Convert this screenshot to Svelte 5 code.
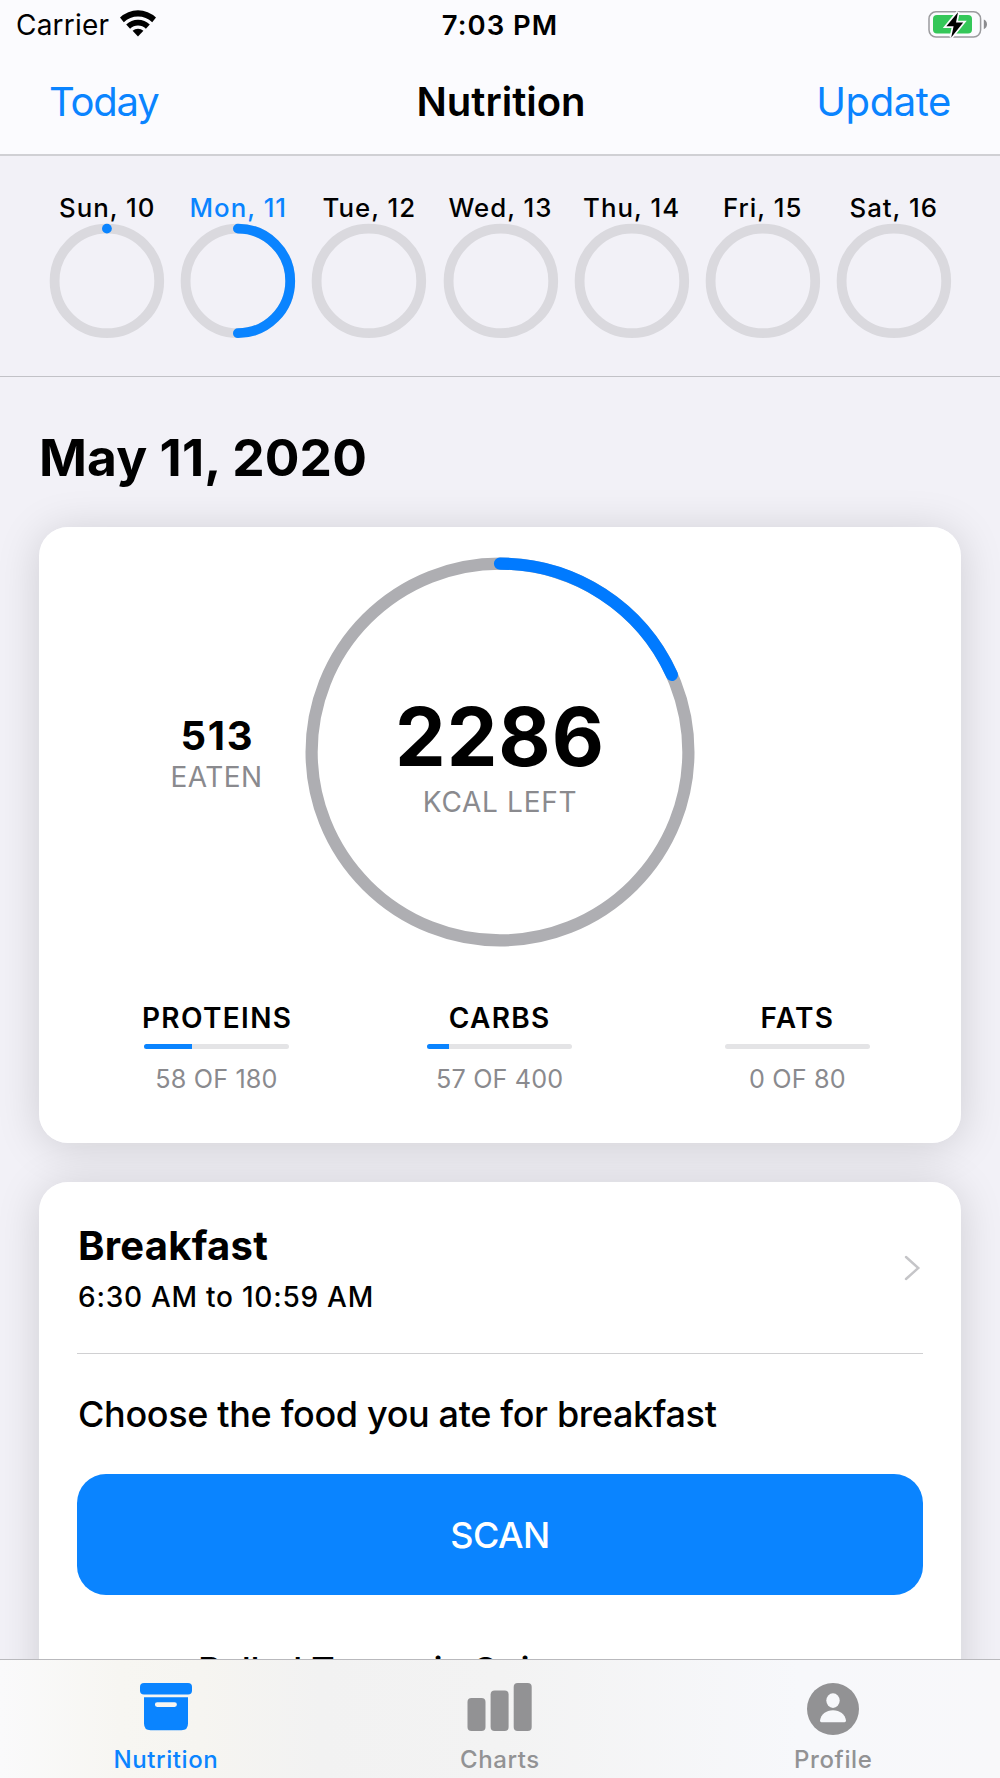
<script>
  const days = [
    { label: 'Sun, 10', progress: 0.0001 },
    { label: 'Mon, 11', progress: 0.5, selected: true },
    { label: 'Tue, 12', progress: 0 },
    { label: 'Wed, 13', progress: 0 },
    { label: 'Thu, 14', progress: 0 },
    { label: 'Fri, 15', progress: 0 },
    { label: 'Sat, 16', progress: 0 }
  ];
  const macros = [
    { name: 'PROTEINS', text: '58 OF 180', fill: 33.3 },
    { name: 'CARBS', text: '57 OF 400', fill: 15 },
    { name: 'FATS', text: '0 OF 80', fill: 0 }
  ];
</script>

<div class="screen">
  <div class="status">
    <div class="carrier">
      <span>Carrier</span>
      <svg class="wifi" viewBox="0 0 36 27" width="36" height="27">
        <path d="M0 7.6 A26 26 0 0 1 36 7.6 L32.2 12.2 A20.5 20.5 0 0 0 3.8 12.2 Z" />
        <path d="M6.2 14.6 A17 17 0 0 1 29.8 14.6 L25.9 18.7 A11.5 11.5 0 0 0 10.1 18.7 Z" />
        <path d="M12.6 20.8 A8.2 8.2 0 0 1 23.4 20.8 L18 26.6 Z" />
      </svg>
    </div>
    <span class="time">7:03 PM</span>
    <svg class="battery" viewBox="0 0 60 30" width="60" height="30">
      <rect x="1" y="2.8" width="51.6" height="25.2" rx="7" fill="none" stroke="#9b9b9e" stroke-width="1.5" />
      <path d="M55.8 10.5 Q59 12 59 15.3 Q59 18.6 55.8 20.2 Z" fill="#8c8c8f" />
      <rect x="5" y="6" width="39" height="18.4" rx="4" fill="#34c759" />
      <path d="M30 3.2 L18.4 17.2 H25.6 L23.2 28.4 L35.2 13.4 H28 Z" fill="#000" stroke="#fbfbfe" stroke-width="3.4" paint-order="stroke" />
    </svg>
  </div>

  <nav class="navbar">
    <span class="link today">Today</span>
    <h1>Nutrition</h1>
    <span class="link update">Update</span>
  </nav>

  <section class="week">
    {#each days as day}
      <div class="day" class:selected={day.selected}>
        <span>{day.label}</span>
        <svg viewBox="0 0 115 115" width="115" height="115">
          <circle class="track" cx="57.9" cy="57.9" r="52.3" />
          {#if day.progress}
            <circle class="value" cx="57.9" cy="57.9" r="52.3" pathLength="1" stroke-dasharray="{day.progress} 2" transform="rotate(-90 57.9 57.9)" />
          {/if}
        </svg>
      </div>
    {/each}
  </section>

  <main>
    <h2>May 11, 2020</h2>

    <section class="card summary">
      <div class="top">
        <div class="eaten">
          <strong>513</strong>
          <span class="caption">EATEN</span>
        </div>
        <div class="ring">
          <svg viewBox="0 0 390 390" width="390" height="390">
            <circle class="track" cx="195" cy="195" r="188.4" />
            <circle class="value" cx="195" cy="195" r="188.4" pathLength="1" stroke-dasharray="0.1828 2" transform="rotate(-90 195 195)" />
          </svg>
          <div class="inner">
            <strong>2286</strong>
            <span class="caption">KCAL LEFT</span>
          </div>
        </div>
        <div></div>
      </div>
      <div class="macros">
        {#each macros as m}
          <div class="macro">
            <b>{m.name}</b>
            <div class="bar"><div class="fill" style="width: {m.fill}%"></div></div>
            <span>{m.text}</span>
          </div>
        {/each}
      </div>
    </section>

    <section class="card meal">
      <header>
        <div class="title">
          <h3>Breakfast</h3>
          <p>6:30 AM to 10:59 AM</p>
        </div>
        <svg viewBox="0 0 18 28" width="18" height="28">
          <path d="M3 3 L15.3 14 L3 25" fill="none" stroke="#c5c5c8" stroke-width="2.4" stroke-linecap="round" stroke-linejoin="miter" />
        </svg>
      </header>
      <p class="prompt">Choose the food you ate for breakfast</p>
      <button>SCAN</button>
      <div class="food">Rolled Turmeric Quinoa</div>
    </section>
  </main>

  <footer class="tabs">
    <div class="tab active">
      <svg viewBox="0 0 52 54" width="52" height="54">
        <rect x="0" y="1" width="52" height="11.4" rx="4" />
        <path fill-rule="evenodd" d="M4 15.3 H48 V41.5 Q48 48.3 41.5 48.3 H10.5 Q4 48.3 4 41.5 Z M17.2 20.3 A2.2 2.2 0 0 0 17.2 24.9 H34.6 A2.2 2.2 0 0 0 34.6 20.3 Z" />
      </svg>
      <span>Nutrition</span>
    </div>
    <div class="tab">
      <svg viewBox="0 0 65 54" width="65" height="54">
        <rect x="0.5" y="16" width="18" height="33" rx="4" />
        <rect x="23.6" y="8.4" width="18" height="40.6" rx="4" />
        <rect x="46.7" y="1" width="18" height="48" rx="4" />
      </svg>
      <span>Charts</span>
    </div>
    <div class="tab">
      <svg viewBox="0 0 52 54" width="52" height="54">
        <circle cx="26" cy="27" r="26" />
        <ellipse cx="26" cy="18.6" rx="6.7" ry="7.3" fill="#f7f8fb" />
        <path d="M13 38.5 C14 32.5 19 28.3 26 28.3 C33 28.3 38 32.5 39 38.5 Q39 40.2 37.6 40.2 H14.4 Q13 40.2 13 38.5 Z" fill="#f7f8fb" />
      </svg>
      <span>Profile</span>
    </div>
  </footer>
</div>

<style>
  :global(body) {
    margin: 0;
    background: #f2f1f7;
  }
  .screen {
    width: 1000px;
    height: 1778px;
    overflow: hidden;
    display: flex;
    flex-direction: column;
    background: #f2f1f7;
    color: #000;
    font-family: Inter, "Liberation Sans", sans-serif;
    font-size: 28px;
    line-height: 34px;
  }
  h1, h2, h3, p { margin: 0; }

  .status {
    flex: none;
    height: 50px;
    display: grid;
    grid-template-columns: 1fr auto 1fr;
    align-items: start;
    padding: 8px 12px 0;
    box-sizing: border-box;
    background: #fbfbfe;
  }
  .carrier {
    display: flex;
    gap: 11px;
    padding-left: 4px;
    letter-spacing: 0.2px;
  }
  .wifi { margin-top: 2px; }
  .time { font-weight: 600; font-size: 27.5px; letter-spacing: 1px; }
  .battery { justify-self: end; margin-top: 1px; }

  .navbar {
    flex: none;
    height: 106px;
    display: grid;
    grid-template-columns: 1fr auto 1fr;
    padding: 28px 49px 0;
    box-sizing: border-box;
    background: #fbfbfe;
    border-bottom: 2px solid #d0d0d4;
    font-size: 40px;
    line-height: 48px;
  }
  .link { color: #0a84ff; }
  .today { letter-spacing: -1.2px; }
  .update { justify-self: end; letter-spacing: -0.4px; }
  h1 { font-size: 40px; font-weight: 600; padding-left: 2px; }

  .week {
    flex: none;
    height: 221px;
    box-sizing: border-box;
    border-bottom: 1px solid #c2c2c7;
    display: grid;
    grid-template-columns: repeat(7, 131.1px);
    justify-content: center;
    padding-top: 36px;
  }
  .day {
    display: flex;
    flex-direction: column;
    align-items: center;
    font-size: 25.8px;
    line-height: 31px;
    letter-spacing: 1px;
    white-space: nowrap;
    font-weight: 450;
  }
  .day span { margin-right: -1px; }
  .day svg { overflow: visible; }
  .selected { color: #0a84ff; }
  circle.track { fill: none; stroke: #dad9de; stroke-width: 9.8; }
  circle.value { fill: none; stroke: #0a84ff; stroke-width: 9.8; stroke-linecap: round; }

  main {
    position: relative;
    z-index: 0;
    flex: 1;
    min-height: 0;
    overflow: hidden;
    padding: 49px 39px 0;
  }
  h2 {
    font-size: 51.5px;
    line-height: 62px;
    font-weight: 700;
    letter-spacing: 0.1px;
    margin-bottom: 39px;
  }
  .card {
    position: relative;
    background: #fff;
    border-radius: 29px;
  }
  /* Shadow sits below every card so neighbours never tint each other. */
  .card::before {
    content: "";
    position: absolute;
    inset: 0;
    z-index: -1;
    border-radius: inherit;
    box-shadow: 0 4px 44px rgba(0, 0, 0, 0.15);
  }
  .summary {
    height: 616px;
    margin-bottom: 39px;
    padding: 30px 0 0;
    box-sizing: border-box;
  }
  .top {
    display: grid;
    grid-template-columns: 266px 390px 266px;
    align-items: center;
  }
  .eaten {
    display: flex;
    flex-direction: column;
    align-items: center;
    padding: 2px 0 0 89px;
  }
  .eaten strong {
    font-size: 40px;
    line-height: 45px;
    letter-spacing: 1.8px;
    margin-right: -1.8px;
  }
  .caption {
    color: #8a8a8e;
    font-size: 28px;
    line-height: 34px;
    letter-spacing: 0.7px;
    margin-top: 2px;
  }
  .eaten .caption { letter-spacing: 0.4px; }
  .ring { display: grid; place-items: center; }
  .ring svg, .inner { grid-area: 1 / 1; }
  .ring .track { stroke: #aeaeb2; stroke-width: 12.2; }
  .ring .value { stroke: #007aff; stroke-width: 12.2; }
  .inner {
    display: flex;
    flex-direction: column;
    align-items: center;
    padding-top: 6px;
  }
  .inner strong { font-size: 80.5px; line-height: 92px; letter-spacing: 1px; }
  .macros {
    display: flex;
    gap: 138.2px;
    padding: 54px 0 0 105px;
  }
  .macro {
    width: 145px;
    display: flex;
    flex-direction: column;
    align-items: center;
    white-space: nowrap;
  }
  .macro + .macro + .macro { margin-left: 14.5px; }
  .macro b { font-weight: 600; letter-spacing: 1.35px; }
  .macro:first-child b { margin-right: -1.35px; }
  .macro span { color: #8a8a8e; font-size: 25.2px; line-height: 30px; letter-spacing: 0.15px; }
  .bar {
    width: 145px;
    height: 5px;
    border-radius: 2.5px;
    background: #e4e4e6;
    overflow: hidden;
    margin: 9px 0 15px;
  }
  .fill { height: 100%; background: #0a84ff; }

  .meal {
    padding: 0 38px;
    height: 640px;
  }
  .meal header {
    display: flex;
    justify-content: space-between;
    height: 172px;
    border-bottom: 1px solid #d0d0d2;
    padding: 40px 2px 0 1px;
    box-sizing: border-box;
  }
  .meal header svg { margin-top: 32px; }
  h3 { font-size: 40px; line-height: 48px; font-weight: 700; letter-spacing: 0.25px; }
  .title p { font-weight: 450; margin-top: 10px; letter-spacing: 0.75px; }
  .prompt {
    font-size: 36px;
    line-height: 44px;
    font-weight: 450;
    letter-spacing: -0.34px;
    padding-left: 1px;
    margin-top: 38px;
    margin-bottom: 38px;
  }
  button {
    display: block;
    width: 846px;
    height: 121px;
    border: 0;
    border-radius: 29px;
    background: #0a84ff;
    color: #fff;
    font: 450 36px/44px Inter, "Liberation Sans", sans-serif;
    letter-spacing: -0.5px;
  }
  .food {
    font-size: 36px;
    line-height: 44px;
    margin: 53px 0 0 121px;
    font-weight: 450;
    letter-spacing: -0.36px;
  }

  .tabs {
    flex: none;
    height: 119px;
    box-sizing: border-box;
    border-top: 1px solid #b9b9bd;
    background: linear-gradient(90deg, #fafafb 0, #f7f6f2 12%, #f6f5f1 20%, #f2f2f2 32%, #f3f3f3 50%, #f7f8fb 80%, #f8f8fa 100%);
    display: grid;
    grid-template-columns: repeat(3, 333.3px);
    padding-top: 22px;
    color: #929294;
    font-size: 24px;
    line-height: 30px;
    font-weight: 500;
    letter-spacing: 0.6px;
  }
  .tab {
    display: flex;
    flex-direction: column;
    align-items: center;
    gap: 9px;
  }
  .tab svg { fill: currentColor; }
  .active { color: #0a84ff; padding-right: 1.5px; }
</style>
